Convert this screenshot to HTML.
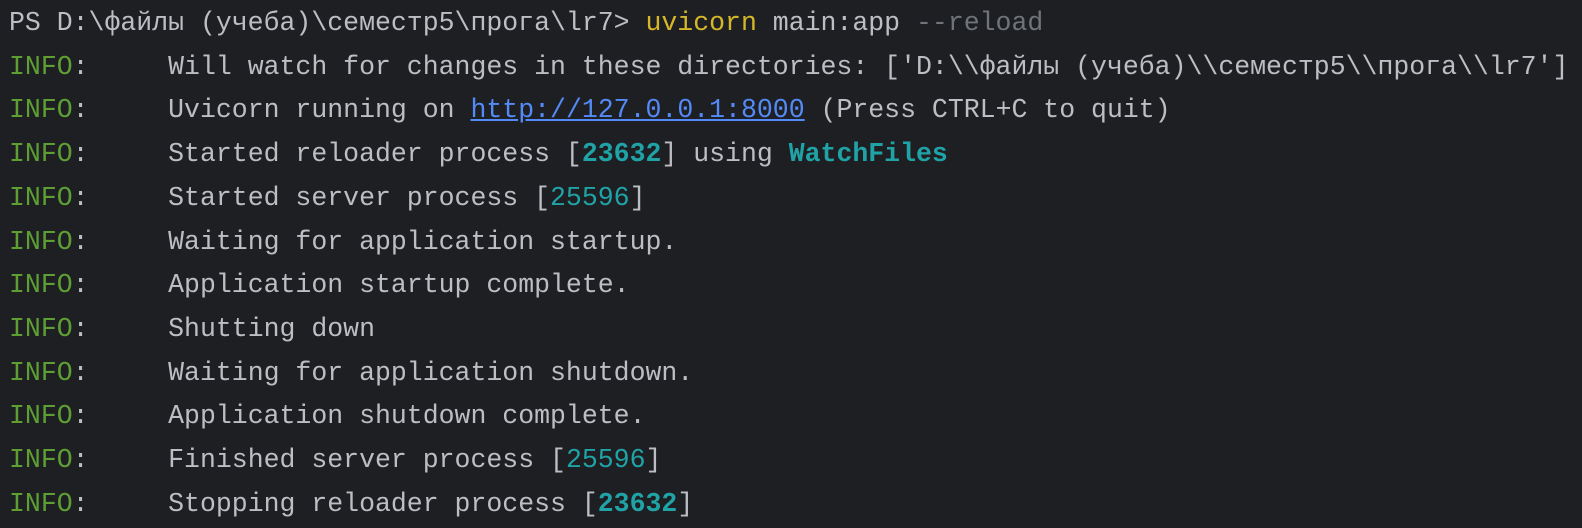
<!DOCTYPE html>
<html><head><meta charset="utf-8"><style>
html,body{margin:0;padding:0;background:#1e1f22;width:1582px;height:528px;overflow:hidden}
pre{margin:0;padding:2px 0 0 9px;font-family:"Liberation Mono","DejaVu Sans Mono",monospace;font-size:26.52px;line-height:43.7px;color:#bcbec4;white-space:pre}
.g{color:#5e9f34}.t{color:#20a3a6}.b{font-weight:bold}.y{color:#d5b72a}.d{color:#6f737a}.l{color:#548af7;text-decoration:underline}
</style></head><body><pre>PS D:\файлы (учеба)\семестр5\прога\lr7&gt; <span class="y">uvicorn</span> main:app <span class="d">--reload</span>
<span class="g">INFO</span>:     Will watch for changes in these directories: ['D:\\файлы (учеба)\\семестр5\\прога\\lr7']
<span class="g">INFO</span>:     Uvicorn running on <span class="l">http://127.0.0.1:8000</span> (Press CTRL+C to quit)
<span class="g">INFO</span>:     Started reloader process [<span class="t b">23632</span>] using <span class="t b">WatchFiles</span>
<span class="g">INFO</span>:     Started server process [<span class="t">25596</span>]
<span class="g">INFO</span>:     Waiting for application startup.
<span class="g">INFO</span>:     Application startup complete.
<span class="g">INFO</span>:     Shutting down
<span class="g">INFO</span>:     Waiting for application shutdown.
<span class="g">INFO</span>:     Application shutdown complete.
<span class="g">INFO</span>:     Finished server process [<span class="t">25596</span>]
<span class="g">INFO</span>:     Stopping reloader process [<span class="t b">23632</span>]</pre></body></html>
